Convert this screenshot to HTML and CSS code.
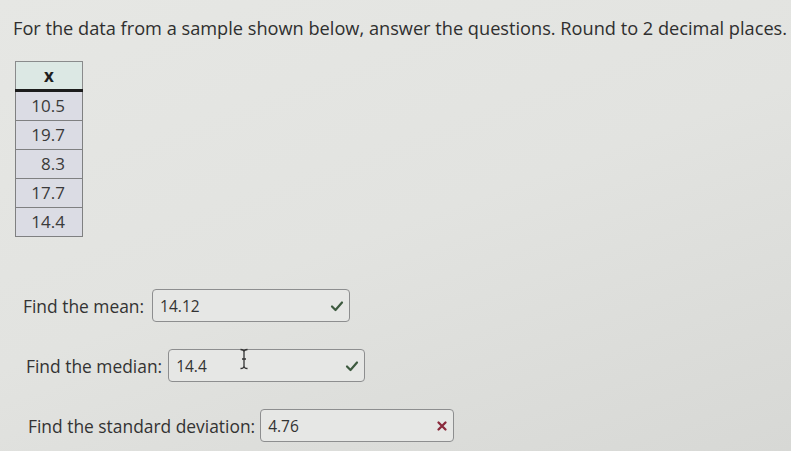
FILE: index.html
```html
<!DOCTYPE html>
<html>
<head>
<meta charset="utf-8">
<link rel="stylesheet" href="styles.css">
</head>
<body>
<div class="page">
  <p class="prompt">For the data from a sample shown below, answer the questions. Round to 2 decimal places.</p>
  <table class="data">
    <thead><tr><th>x</th></tr></thead>
    <tbody>
      <tr><td>10.5</td></tr>
      <tr><td>19.7</td></tr>
      <tr><td>8.3</td></tr>
      <tr><td>17.7</td></tr>
      <tr><td>14.4</td></tr>
    </tbody>
  </table>
  <div class="questions">
    <div class="q q-mean">
      <span class="label">Find the mean:</span>
      <div class="answer w-mean"><span class="val">14.12</span>
        <svg class="mark" width="14" height="12" viewBox="0 0 14 12"><path d="M2 6.5 L5.5 10 L12 2.5" fill="none" stroke="#3d5a3f" stroke-width="2.2" stroke-linecap="round" stroke-linejoin="round"/></svg>
      </div>
    </div>
    <div class="q q-median">
      <span class="label">Find the median:</span>
      <div class="answer w-median"><span class="val">14.4</span>
        <svg class="cursor" width="10" height="22" viewBox="0 0 10 22"><path d="M1.5 1.5 Q5 1.5 5 4 L5 18 Q5 20.5 1.5 20.5 M8.5 1.5 Q5 1.5 5 4 M5 18 Q5 20.5 8.5 20.5 M3 11 L7 11" fill="none" stroke="#333" stroke-width="1.3"/></svg>
        <svg class="mark" width="14" height="12" viewBox="0 0 14 12"><path d="M2 6.5 L5.5 10 L12 2.5" fill="none" stroke="#3d5a3f" stroke-width="2.2" stroke-linecap="round" stroke-linejoin="round"/></svg>
      </div>
    </div>
    <div class="q q-sd">
      <span class="label">Find the standard deviation:</span>
      <div class="answer w-sd"><span class="val">4.76</span>
        <svg class="mark" width="12" height="12" viewBox="0 0 12 12"><path d="M2.5 2.5 L9.5 9.5 M9.5 2.5 L2.5 9.5" fill="none" stroke="#8a2a3c" stroke-width="2.3" stroke-linecap="round"/></svg>
      </div>
    </div>
  </div>
</div>
</body>
</html>
```

FILE: styles.css
```css
html, body {
  margin: 0;
  padding: 0;
}
body {
  width: 791px;
  height: 451px;
  overflow: hidden;
  background: linear-gradient(160deg, #e6e7e4 0%, #e2e3e0 50%, #d7d8d5 100%);
  font-family: "Open Sans", "Noto Sans", sans-serif;
  color: #333;
}
.page {
  padding: 13px 0 0 13px;
}
.prompt {
  margin: 0;
  font-size: 18.2px;
  line-height: 30px;
  color: #2f2f2f;
  white-space: nowrap;
}
.data {
  margin: 18px 0 0 2px;
  border-collapse: collapse;
  font-size: 17px;
}
.data th {
  width: 66px;
  height: 27px;
  padding: 0;
  border: 1px solid #8a8b8c;
  border-bottom: 3px solid #1c1c1c;
  background: #dce8e4;
  font-size: 17px;
  font-weight: 700;
  color: #1f1f1f;
  text-align: center;
}
.data td {
  height: 28px;
  padding: 0 17px 0 0;
  border: 1px solid #7f8081;
  background: #dbdce4;
  text-align: right;
  color: #3a3a3a;
  line-height: 28px;
}
.questions {
  display: flex;
  flex-direction: column;
  gap: 27px;
  margin-top: 52px;
}
.q {
  display: flex;
  align-items: center;
  gap: 6px;
  font-size: 17.4px;
}
.q-mean { margin-left: 10px; gap: 8px; }
.q-median { margin-left: 13px; }
.q-sd { margin-left: 15px; gap: 5px; }
.label {
  color: #333;
}
.answer {
  position: relative;
  height: 31px;
  border: 1px solid #8d8e8f;
  border-radius: 4px;
  background: #e6e7e5;
  display: flex;
  align-items: center;
  padding: 0 5px 0 7px;
  box-sizing: content-box;
}
.w-mean { width: 184px; }
.w-median { width: 183px; }
.w-sd { width: 180px; }
.val {
  font-size: 15.5px;
  color: #333;
  flex: 1;
}
.mark {
  flex: none;
}
.cursor {
  position: absolute;
  left: 70px;
  top: -2px;
}
```
